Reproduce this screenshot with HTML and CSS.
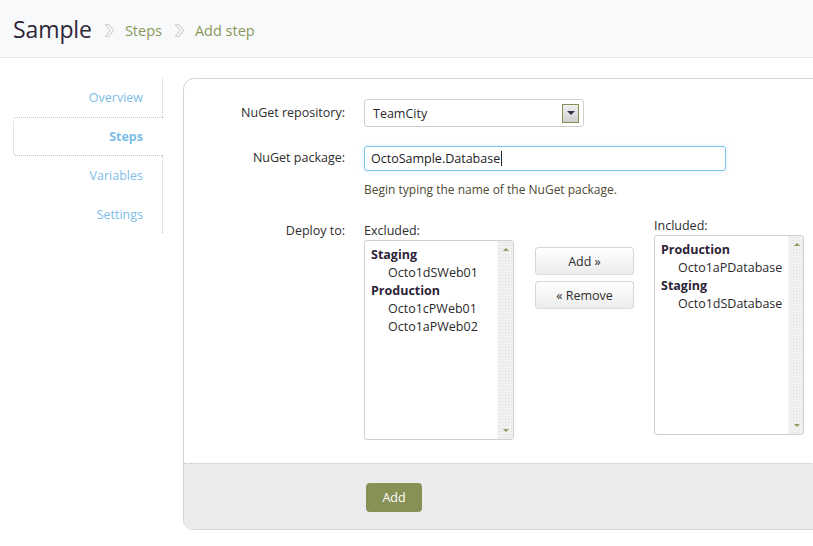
FILE: index.html
```html
<!DOCTYPE html>
<html>
<head>
<meta charset="utf-8">
<link rel="stylesheet" href="styles.css">
</head>
<body>
<header class="header">
  <h1 class="title">Sample</h1>
  <svg class="chev" width="11" height="15" viewBox="0 0 11 15"><path d="M1.5 1.5 H5 L9.5 7.5 L5 13.5 H1.5 L6 7.5 Z" fill="none" stroke="#d2d2d2" stroke-width="1.2" stroke-linejoin="round"/></svg>
  <a class="crumb">Steps</a>
  <svg class="chev" width="11" height="15" viewBox="0 0 11 15"><path d="M1.5 1.5 H5 L9.5 7.5 L5 13.5 H1.5 L6 7.5 Z" fill="none" stroke="#d2d2d2" stroke-width="1.2" stroke-linejoin="round"/></svg>
  <a class="crumb">Add step</a>
</header>
<div class="content">
  <nav class="sidebar">
    <ul class="nav">
      <li class="nav-item">Overview</li>
      <li class="nav-item active">Steps</li>
      <li class="nav-item">Variables</li>
      <li class="nav-item">Settings</li>
    </ul>
  </nav>
  <section class="panel">
    <div class="form">
      <label class="label row1">NuGet repository:</label>
      <div class="field row1">
        <div class="select">
          <span class="select-text">TeamCity</span>
          <span class="select-btn"><span class="tri-down"></span></span>
        </div>
      </div>
      <label class="label row2">NuGet package:</label>
      <div class="field row2">
        <div class="input">OctoSample.Database<span class="caret"></span></div>
        <div class="hint">Begin typing the name of the NuGet package.</div>
      </div>
      <label class="label row3">Deploy to:</label>
      <div class="field row3">
        <div class="deploy">
          <div class="list-col">
            <div class="list-label">Excluded:</div>
            <div class="listbox">
              <div class="list-items">
                <div class="grp">Staging</div>
                <div class="itm">Octo1dSWeb01</div>
                <div class="grp">Production</div>
                <div class="itm">Octo1cPWeb01</div>
                <div class="itm">Octo1aPWeb02</div>
              </div>
              <div class="scroll"><span class="arr-up"></span><span class="arr-down"></span></div>
            </div>
          </div>
          <div class="btn-col">
            <button class="btn">Add &raquo;</button>
            <button class="btn">&laquo; Remove</button>
          </div>
          <div class="list-col included">
            <div class="list-label">Included:</div>
            <div class="listbox">
              <div class="list-items">
                <div class="grp">Production</div>
                <div class="itm">Octo1aPDatabase</div>
                <div class="grp">Staging</div>
                <div class="itm">Octo1dSDatabase</div>
              </div>
              <div class="scroll"><span class="arr-up"></span><span class="arr-down"></span></div>
            </div>
          </div>
        </div>
      </div>
    </div>
    <div class="footer">
      <button class="primary">Add</button>
    </div>
  </section>
</div>
</body>
</html>
```

FILE: styles.css
```css
* { box-sizing: border-box; }
html, body { margin: 0; padding: 0; }
body {
  font-family: "Open Sans", "Noto Sans", sans-serif;
  font-size: 12px;
  color: #2f2f2f;
  background: #fff;
  width: 813px;
  height: 546px;
  overflow: hidden;
}
.header {
  height: 58px;
  background: #f8f9fa;
  border-bottom: 1px solid #e5e7ea;
  display: flex;
  align-items: center;
  padding-left: 13px;
  padding-top: 1px;
}
.title {
  margin: 0;
  font-weight: 400;
  font-size: 23px;
  color: #2f2739;
  margin-right: 12px;
  letter-spacing: -0.1px;
}
.chev { margin-right: 10px; margin-top: 3px; }
.crumb {
  color: #8a9859;
  font-size: 14.5px;
  margin-right: 12px;
  margin-top: 3px;
}
.content {
  display: flex;
  padding-top: 20px;
}
.sidebar {
  width: 163px;
  flex: none;
}
.nav {
  list-style: none;
  margin: 0;
  padding: 0;
  border-right: 1px dotted #c9c9c9;
  height: 155px;
}
.nav-item {
  height: 39px;
  line-height: 39px;
  text-align: right;
  padding-right: 19px;
  color: #7dbde9;
  font-size: 12.5px;
}
.nav-item:first-child { line-height: 40px; }
.nav-item.active {
  margin-left: 13px;
  margin-right: -1px;
  background: #fff;
  border: 1px dotted #c9c9c9;
  border-right: none;
  border-radius: 4px 0 0 4px;
  font-weight: 700;
  padding-right: 20px;
  line-height: 37px;
}
.panel {
  flex: none;
  width: 700px;
  margin-left: 20px;
  border: 1px solid #d3d3d3;
  border-radius: 11px 0 0 10px;
  height: 452px;
  display: flex;
  flex-direction: column;
  overflow: hidden;
}
.form {
  flex: 1;
  display: grid;
  grid-template-columns: 161px auto;
  column-gap: 19px;
  padding-top: 20px;
  align-content: start;
}
.label {
  text-align: right;
  font-size: 12.5px;
  color: #2e2e2e;
}
.label.row1 { line-height: 28px; }
.label.row2 { line-height: 24px; margin-top: 19px; }
.label.row3 { margin-top: 24px; line-height: 18px; }
.field.row2 { margin-top: 19px; }
.field.row3 { margin-top: 24px; }
.select {
  width: 220px;
  height: 28px;
  border: 1px solid #cfcfcf;
  border-radius: 3px;
  display: flex;
  align-items: center;
  justify-content: space-between;
  padding: 0 4px 0 8px;
  font-size: 12.5px;
  color: #2a2a2a;
  background: #fff;
}
.select-btn {
  width: 17px;
  height: 19px;
  border: 1px solid #878f58;
  background: linear-gradient(#f0f0f0, #cfcfcf);
  display: flex;
  align-items: center;
  justify-content: center;
}
.tri-down {
  width: 0; height: 0;
  border-left: 4px solid transparent;
  border-right: 4px solid transparent;
  border-top: 4px solid #3b2c46;
}
.input {
  width: 362px;
  height: 25px;
  border: 1px solid #7cc4f0;
  border-radius: 3px;
  box-shadow: 0 0 4px rgba(140, 200, 240, 0.35);
  padding: 0 6px;
  line-height: 23px;
  font-size: 12.5px;
  color: #222;
  display: flex;
  align-items: center;
}
.caret {
  display: inline-block;
  width: 1px;
  height: 15px;
  background: #222;
  margin-left: 1px;
}
.hint {
  margin-top: 11px;
  font-size: 12px;
  color: #4d4a33;
  line-height: 16px;
}
.deploy {
  display: flex;
  align-items: flex-start;
}
.list-col { width: 150px; }
.included { margin-top: -5px; margin-left: 20px; }
.list-label {
  line-height: 18px;
  font-size: 12.5px;
  margin-bottom: 0;
  color: #2e2e2e;
}
.listbox {
  height: 200px;
  border: 1px solid #cfcfcf;
  border-radius: 3px;
  display: flex;
  background: #fff;
}
.list-items {
  flex: 1;
  padding: 5px 6px;
  font-size: 12.5px;
  line-height: 18px;
}
.grp { font-weight: 700; color: #2d2438; }
.itm { padding-left: 17px; color: #2a2a2a; }
.scroll {
  width: 16px;
  background-color: #f1f1f1;
  background-image: radial-gradient(#dcdcdc 0.6px, transparent 0.8px);
  background-size: 3px 3px;
  border-left: 1px solid #f5f5f5;
  position: relative;
  border-radius: 0 2px 2px 0;
}
.arr-up, .arr-down {
  position: absolute;
  left: 5px;
  width: 0; height: 0;
  border-left: 3px solid transparent;
  border-right: 3px solid transparent;
}
.arr-up { top: 7px; border-bottom: 3px solid #8c9b5c; }
.arr-down { bottom: 7px; border-top: 3px solid #8c9b5c; }
.btn-col {
  width: 99px;
  margin-left: 21px;
  margin-top: 25px;
  display: flex;
  flex-direction: column;
  gap: 6px;
}
.btn {
  font-family: inherit;
  height: 28px;
  font-size: 12.5px;
  color: #2e2e2e;
  background: linear-gradient(#ffffff, #ececec);
  border: 1px solid #d6d6d6;
  border-bottom: 1px dotted #b8b8b8;
  border-radius: 4px;
  padding: 0;
}
.footer {
  height: 66px;
  background: #ebecee;
  border-top: 1px dotted #c6c6c6;
  padding-left: 182px;
  display: flex;
  align-items: center;
  padding-top: 2px;
}
.primary {
  font-family: inherit;
  width: 56px;
  height: 29px;
  background: #879156;
  color: #fff;
  border: none;
  border-radius: 4px;
  font-size: 12.5px;
}
```
